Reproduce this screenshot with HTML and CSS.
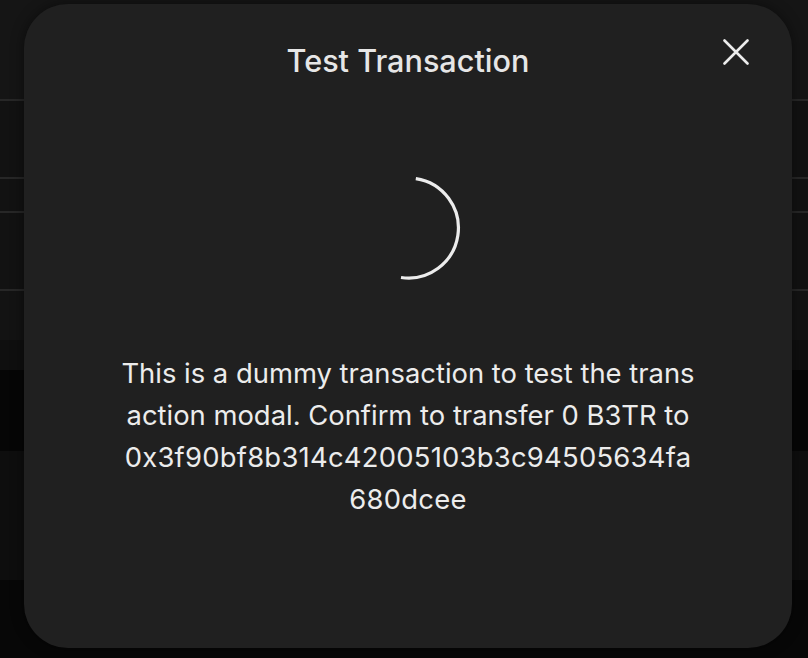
FILE: index.html
```html
<!DOCTYPE html>
<html lang="en">
<head>
<meta charset="utf-8">
<title>Test Transaction</title>
<link rel="stylesheet" href="styles.css">
</head>
<body>
<div class="backdrop">
  <div class="row r1"></div>
  <div class="row r2"></div>
  <div class="row r3"></div>
  <div class="row r4"></div>
  <div class="row r5"></div>
  <div class="row r6"></div>
  <div class="row r7"></div>
  <div class="row r8"></div>
  <div class="row r9"></div>
</div>
<div class="modal" role="dialog" aria-labelledby="modal-title">
  <h2 class="modal-title" id="modal-title">Test Transaction</h2>
  <button class="close-btn" aria-label="Close">
    <svg width="26" height="26" viewBox="0 0 26 26" fill="none" stroke="#ececec" stroke-width="2.6" stroke-linecap="round">
      <path d="M1.5 1.5 L24.5 24.5 M24.5 1.5 L1.5 24.5"/>
    </svg>
  </button>
  <div class="spinner">
    <svg width="108" height="108" viewBox="0 0 108 108" fill="none">
      <path d="M61.8 4.6 A50 50 0 0 1 47 103.5" stroke="#ececec" stroke-width="3.2"/>
    </svg>
  </div>
  <p class="modal-text">This is a dummy transaction to test the transaction modal. Confirm to transfer 0 B3TR to <span class="address">0x3f90bf8b314c42005103b3c94505634fa680dcee</span></p>
</div>
</body>
</html>
```
FILE: styles.css
```css
* { box-sizing: border-box; }
html, body { margin: 0; padding: 0; }
body {
  width: 808px;
  height: 658px;
  overflow: hidden;
  background: #070707;
  font-family: Inter, "Noto Sans", sans-serif;
  position: relative;
}
.backdrop {
  display: flex;
  flex-direction: column;
  height: 658px;
}
.row { flex: none; }
.r1 { height: 101px; background: #151515; border-bottom: 2px solid #272727; }
.r2 { height: 78px; background: #121212; border-bottom: 2px solid #272727; }
.r3 { height: 34px; background: #121212; border-bottom: 2px solid #272727; }
.r4 { height: 78px; background: #121212; border-bottom: 2px solid #272727; }
.r5 { height: 49px; background: #131313; }
.r6 { height: 30px; background: #0f0f0f; }
.r7 { height: 81px; background: #060606; }
.r8 { height: 129px; background: #0e0e0e; }
.r9 { height: 78px; background: #070707; }

.modal {
  position: absolute;
  left: 24px;
  top: 4px;
  width: 768px;
  height: 644px;
  background: #202020;
  border-radius: 44px;
  box-shadow: 0 0 14px rgba(0, 0, 0, 0.45);
  padding: 37px 80px 0;
  display: flex;
  flex-direction: column;
  align-items: center;
  color: #ececec;
}
.modal-title {
  margin: 0;
  font-size: 30.6px;
  font-weight: 500;
  line-height: 40px;
  color: #e6e6e6;
}
.close-btn {
  position: absolute;
  top: 35px;
  right: 43px;
  width: 26px;
  height: 26px;
  padding: 0;
  border: 0;
  background: none;
  display: block;
}
.close-btn svg { display: block; }
.spinner {
  margin-top: 93px;
  width: 108px;
  height: 108px;
}
.spinner svg { display: block; }
.modal-text {
  margin: 70px 0 0;
  width: 576px;
  font-size: 27.4px;
  line-height: 42px;
  text-align: center;
  word-break: break-all;
  color: #ececec;
}
.address {
  letter-spacing: 0.25px;
}
```
